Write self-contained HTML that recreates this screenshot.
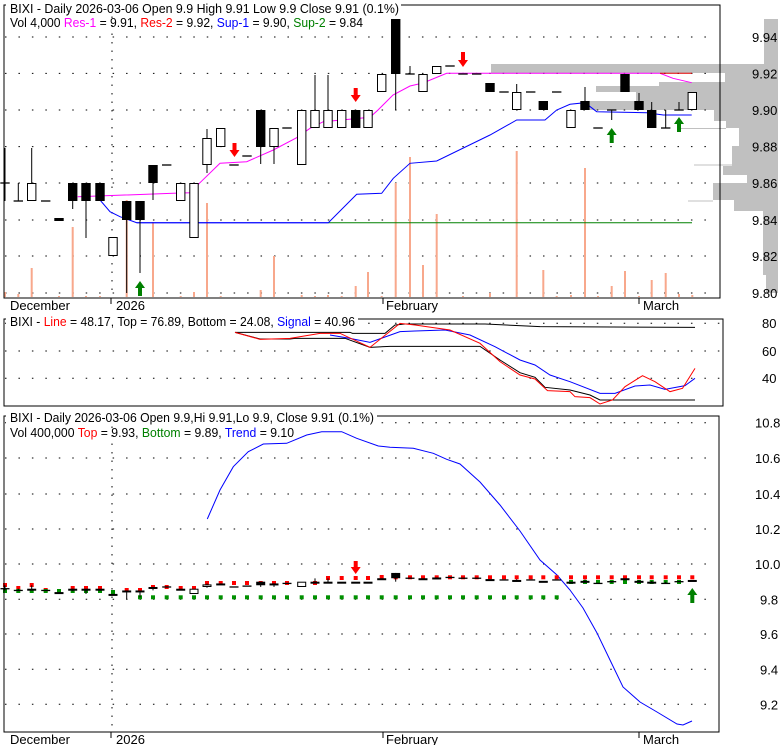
<!DOCTYPE html>
<html><head><meta charset="utf-8"><style>
html,body{margin:0;padding:0;background:#fff;width:780px;height:745px;overflow:hidden}
svg{display:block;font-family:"Liberation Sans",Arial,sans-serif;font-size:13px}
</style></head><body>
<svg id="s" width="780" height="745" xmlns="http://www.w3.org/2000/svg"></svg>
<script>
var S=document.getElementById('s'),h='';
function L(x1,y1,x2,y2,c,w,d){h+='<line x1="'+x1+'" y1="'+y1+'" x2="'+x2+'" y2="'+y2+'" stroke="'+(c||'#000')+'" stroke-width="'+(w||1)+'"'+(d?' stroke-dasharray="'+d+'"':'')+'/>';}
function R(x,y,w,hh,f,s){h+='<rect x="'+x+'" y="'+y+'" width="'+w+'" height="'+hh+'" fill="'+f+'"'+(s?' stroke="'+s+'" stroke-width="1"':'')+'/>';}
function P(pts,c,w){h+='<polyline fill="none" stroke="'+c+'" stroke-width="'+(w||1)+'" points="'+pts.map(function(p){return p[0]+','+p[1]}).join(' ')+'"/>';}
function T(x,y,s,fs,len){h+='<text x="'+x+'" y="'+y+'" font-size="'+(fs||13)+'"'+(len?' textLength="'+len+'" lengthAdjust="spacingAndGlyphs"':'')+'>'+s+'</text>';}
function arrow(x,y1,y2,c,up){var w=5;if(up){h+='<polygon fill="'+c+'" points="'+x+','+y1+' '+(x+w)+','+(y1+7)+' '+(x+2)+','+(y1+7)+' '+(x+2)+','+y2+' '+(x-2)+','+y2+' '+(x-2)+','+(y1+7)+' '+(x-w)+','+(y1+7)+'"/>';}else{h+='<polygon fill="'+c+'" points="'+x+','+y2+' '+(x+w)+','+(y2-7)+' '+(x+2)+','+(y2-7)+' '+(x+2)+','+y1+' '+(x-2)+','+y1+' '+(x-2)+','+(y2-7)+' '+(x-w)+','+(y2-7)+'"/>';}}
var GD='1.5 11.95';
// ===== Panel 1 =====
// volume profile gray
var vp=[[19,64,764],[64,73,491],[73,82,725],[82,86,659],[86,92,596],[92,101,636],[101,110,590],[110,121,714],[121,128,726],[128,146,739],[146,155,732],[155,166,732],[166,175,723],[175,183,747],[183,200,713],[200,211,734],[211,275,763],[275,293,766]];
vp.forEach(function(v){R(v[2],v[0],778-v[2],v[1]-v[0],'#c0c0c0');});
L(677,128.5,726,128.5,'#c0c0c0',1);L(694,165,732,165,'#c0c0c0',1);L(688,201,713,201,'#c0c0c0',1);
// grid
[37,73.4,110,146.6,183,220,256,293].forEach(function(y){L(5,y,716,y,'#000',1,GD);});
L(112,8,112,297,'#000',1,'1.5 7');
// volume bars
var X=[5,18.3,31.7,45.7,59,72.7,86,100,113,126.7,140,153,166.7,180.7,194,207,220.7,234,247,260.7,274,287,301.7,315,328,341.7,355.7,368,381.7,395.7,410,423,436.7,450,463,476.7,490,504,516.7,530.7,543.3,556.7,571,585,598,611.7,625,639,651.7,665.7,679,692.3];
var vol={0:292,1:294,2:268,4:296,5:227,6:296,7:296,9:200,11:222,13:296,14:292,15:203,16:296,19:290,20:256,22:295,23:296,24:295,25:296,26:286,27:272,28:296,29:183,30:157,31:265,32:214,34:296,36:293,38:151,40:270,41:296,42:295,43:168,44:296,45:286,46:271,47:296,48:280,49:273,50:294,51:295};
for(var k in vol){R(X[k]-1,vol[k],2,297-vol[k],'#f8a88c');}
// indicator lines
P([[136.7,222.7],[328.3,222.7]],'#0000ff');
P([[328.3,222.7],[692,222.7]],'#008000');
P([[77.7,196.7],[173.3,193.3],[190,192.7],[200,182.7],[220,163.3],[246.7,161.7],[273.3,150],[296.7,137.7],[310,128.3],[323.3,121.7],[370,117.3],[378,110],[393,95],[410,86],[423,83],[446.7,73.3],[660,73.3],[673,78.3],[691.7,82.7]],'#ff00ff');
P([[660,73.3],[692,73.3]],'#e00000');
P([[100,200],[110,211.7],[120,216.7],[136.7,222.7],[328.3,222.7],[356.7,194.3],[381.7,193.3],[393.3,178.3],[410,163.3],[436.7,161],[490,135],[516.7,120],[545,120],[556.7,110],[570,104.3],[585,102.7],[596.7,111.7],[646.7,112.7],[663.3,115],[691.7,115]],'#0000ff');
// candles: [i,top,bot,type(0 open,1 fill,2 dash),wt,wb]
var C=[[0,183,183,2,148,201],[1,201,201,2,183,201],[2,183,201,0,148,201],[3,201,201,2],[4,218,221,1],[5,183,201,1,183,209],[6,183,201,1,183,238],[7,183,201,1],[8,237,256,0],[9,201,220,1,201,293],[10,201,220,1,201,273],[11,165,183,1,165,200],[12,165,165,2],[13,183,201,0],[14,183,238,0],[15,138,165,0,129,173],[16,128,147,0],[17,165,165,2],[18,156,156,2],[19,110,147,1,110,164],[20,128,147,0,128,164],[21,128,128,2],[22,110,165,0],[23,110,128,0,75,128],[24,110,128,0,75,128],[25,110,128,0],[26,110,128,1],[27,110,128,0],[28,74,92,0],[29,19,74,1,19,110],[30,74,74,2,66,74],[31,74,92,0],[32,66,74,0],[33,66,66,2],[34,74,74,2],[35,74,74,2],[36,83,92,1],[37,92,92,2],[38,92,110,0,84,110],[39,92,92,2],[40,101,110,1],[41,92,92,2],[42,110,128,0],[43,101,110,1,87,110],[44,128,128,2],[45,110,110,2,110,120],[46,74,92,1],[47,101,110,1,93,110],[48,110,128,1,102,128],[49,128,128,2,110,128],[50,110,110,2,102,110],[51,92,110,0]];
function drawC(f,hw,minH){C.forEach(function(c){var x=X[c[0]],t=f(c[1]),b=f(c[2]);
 if(c[4]!==undefined)L(x,f(c[4]),x,f(c[5]),'#000',1);
 if(c[3]==2){L(x-hw,t,x+hw,t,'#000',1.3);}
 else{var hh=Math.max(b-t,minH);if(c[3]==1)R(x-hw,t,2*hw,hh,'#000');else R(x-hw+0.5,t+0.5,2*hw-1,Math.max(hh-1,1),'#fff','#000');}
});}
drawC(function(y){return y},4.7,2);
arrow(140,281,296,'#008000',1);arrow(611.7,128,143,'#008000',1);arrow(679,117,132,'#008000',1);
arrow(234.5,143,157,'#ff0000',0);arrow(355.7,88,102,'#ff0000',0);arrow(463,52,67,'#ff0000',0);
// frame
R(4,5,716,293,'none','#000');
R(6,0,395,15,'#fff');
T(10,13,'BIXI - Daily 2026-03-06 Open 9.9  High 9.91  Low 9.9  Close 9.91 (0.1%)',13,389);
h+='<text x="10" y="27" font-size="13" textLength="353" lengthAdjust="spacingAndGlyphs">Vol 4,000 <tspan fill="#ff00ff">Res-1</tspan> = 9.91, <tspan fill="#ff0000">Res-2</tspan> = 9.92, <tspan fill="#0000ff">Sup-1</tspan> = 9.90, <tspan fill="#008000">Sup-2</tspan> = 9.84</text>';
['9.94','9.92','9.90','9.88','9.86','9.84','9.82','9.80'].forEach(function(s,i){T(752,[37,73.4,110,146.6,183,220,256,293][i]+5,s,13);});
// month labels
function months(y0,yt){L(111,y0,111,y0+6);L(383,y0,383,y0+6);L(639,y0,639,y0+6);T(10,yt,'December');T(116,yt,'2026');T(386,yt,'February');T(643,yt,'March');}
months(298,310);
// ===== Panel 2 =====
[323.3,351,378.3].forEach(function(y){L(5,y,720,y,'#000',1,GD);});
function cv(a){return a.map(function(p){return [p[0]/2,300+p[1]/3]});}
P(cv([[470,97],[700,97],[705,100],[770,100],[790,75],[810,72],[970,72],[1080,80],[1390,82]]),'#000');
P(cv([[470,97],[520,117],[580,117],[590,115],[690,115],[740,142],[780,139],[960,139],[1000,180],[1040,218],[1070,232],[1090,262],[1140,270],[1180,285],[1200,300],[1390,300]]),'#000');
P(cv([[660,105],[700,115],[740,127],[800,95],[830,93],[890,90],[940,105],[990,140],[1040,180],[1070,195],[1100,225],[1140,245],[1200,280],[1230,280],[1270,258],[1300,255],[1330,268],[1370,257],[1390,235]]),'#0000ff');
P(cv([[470,97],[520,118],[580,115],[640,100],[680,100],[740,142],[800,70],[830,75],[900,90],[960,130],[1000,185],[1040,225],[1070,237],[1095,272],[1140,275],[1150,290],[1180,293],[1200,312],[1225,300],[1250,260],[1285,227],[1310,245],[1340,275],[1365,265],[1390,205]]),'#ff0000');
R(4,319,719,87,'none','#000');
R(6,313,352,13,'#fff');
h+='<text x="10" y="326" font-size="13" textLength="345" lengthAdjust="spacingAndGlyphs">BIXI - <tspan fill="#ff0000">Line</tspan> = 48.17, Top = 76.89, Bottom = 24.08, <tspan fill="#0000ff">Signal</tspan> = 40.96</text>';
T(762,328,'80');T(762,356,'60');T(762,383,'40');
// ===== Panel 3 =====
var g3=[422.7,458,494,529,564,599.3,634,669.3,704.3];
g3.forEach(function(y){L(5,y,716,y,'#000',1,GD);});
L(112,418,112,730,'#000',1,'1.5 7');
P([[207.3,519],[220,490],[233.3,466.7],[248.3,451.7],[263.3,444],[286.7,443.3],[306.7,435],[321.7,431.7],[341.7,431.7],[356.7,438.3],[378.3,446],[390,447.3],[413.3,448.3],[433.3,453.3],[446.7,459.3],[460,464],[480,482],[500,505],[520,531],[540,560],[557,575],[570,590],[583,608],[597,633],[610,660],[623,687],[640,702],[657,712],[677,724],[683,725],[692,721]],'#0000ff');
// dots
var red={0:585,1:588,2:585,3:590,4:592,5:588,6:588,7:588,9:590,10:590,11:587,12:587,13:588,14:588,15:583,16:583,17:583,18:583,19:583,20:583,21:583,23:583,24:578,25:578,26:578,27:578,28:577};
for(var i=29;i<52;i++)red[i]=577.3;
for(var k in red)R(X[k]-2,red[k]-2,4,4,'#ff0000');
for(var i=0;i<52;i++){var gy=i<8?591:(i==8?592:(i==9?null:(i<=41?597.3:582)));if(i==51)gy=null;if(gy)R(X[i]-2,gy-2,4,4,'#009000');}
drawC(function(y){return 599.3-(293-y)*0.0962},4.5,2);
arrow(355.7,561,574,'#ff0000',0);arrow(692.3,588,603,'#008000',1);
R(4,416,715,316,'none','#000');
R(6,410,371,14,'#fff');
T(10,422,'BIXI - Daily 2026-03-06 Open 9.9,Hi 9.91,Lo 9.9, Close 9.91 (0.1%)',13,364);
h+='<text x="10" y="437" font-size="13" textLength="284" lengthAdjust="spacingAndGlyphs">Vol 400,000 <tspan fill="#ff0000">Top</tspan> = 9.93, <tspan fill="#008000">Bottom</tspan> = 9.89, <tspan fill="#0000ff">Trend</tspan> = 9.10</text>';
['10.8','10.6','10.4','10.2','10.0','9.8','9.6','9.4','9.2'].forEach(function(s,i){T(s.length==4?755:760,g3[i]+5,s);});
months(732,744);
S.innerHTML=h;
</script>
</body></html>
